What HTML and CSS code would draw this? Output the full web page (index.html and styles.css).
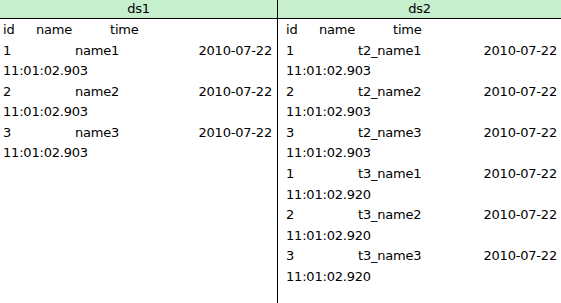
FILE: index.html
```html
<!DOCTYPE html>
<html>
<head>
<meta charset="utf-8">
<link rel="stylesheet" href="styles.css">
</head>
<body>
<div class="panes">
  <section class="pane pane-left">
    <div class="pane-head">ds1</div>
    <div class="pane-body">
      <div class="cols"><span>id</span><span>name</span><span>time</span></div>
      <div class="rec"><span>1</span><span>name1</span><span class="dt">2010-07-22</span><span class="tm">11:01:02.903</span></div>
      <div class="rec"><span>2</span><span>name2</span><span class="dt">2010-07-22</span><span class="tm">11:01:02.903</span></div>
      <div class="rec"><span>3</span><span>name3</span><span class="dt">2010-07-22</span><span class="tm">11:01:02.903</span></div>
    </div>
  </section>
  <section class="pane pane-right">
    <div class="pane-head">ds2</div>
    <div class="pane-body">
      <div class="cols"><span>id</span><span>name</span><span>time</span></div>
      <div class="rec"><span>1</span><span>t2_name1</span><span class="dt">2010-07-22</span><span class="tm">11:01:02.903</span></div>
      <div class="rec"><span>2</span><span>t2_name2</span><span class="dt">2010-07-22</span><span class="tm">11:01:02.903</span></div>
      <div class="rec"><span>3</span><span>t2_name3</span><span class="dt">2010-07-22</span><span class="tm">11:01:02.903</span></div>
      <div class="rec"><span>1</span><span>t3_name1</span><span class="dt">2010-07-22</span><span class="tm">11:01:02.920</span></div>
      <div class="rec"><span>2</span><span>t3_name2</span><span class="dt">2010-07-22</span><span class="tm">11:01:02.920</span></div>
      <div class="rec"><span>3</span><span>t3_name3</span><span class="dt">2010-07-22</span><span class="tm">11:01:02.920</span></div>
    </div>
  </section>
</div>
</body>
</html>
```
FILE: styles.css
```css
html, body {
  margin: 0;
  padding: 0;
  background: #ffffff;
}
body {
  font-family: "DejaVu Sans", Verdana, sans-serif;
  font-size: 13px;
  letter-spacing: -0.2px;
  color: #000000;
}
.panes {
  display: grid;
  grid-template-columns: 278px 1fr;
  height: 303px;
  overflow: hidden;
}
.pane-left {
  border-right: 1px solid #000000;
}
.pane-head {
  height: 18px;
  line-height: 18px;
  background: #c6efce;
  border-bottom: 1px solid #000000;
  text-align: center;
}
.pane-body {
  padding-top: 1px;
  line-height: 20.56px;
}
.pane-left .pane-body {
  padding-left: 3px;
  padding-right: 5px;
}
.pane-right .pane-body {
  padding-left: 8px;
  padding-right: 4px;
}
.cols {
  display: grid;
  grid-template-columns: 33px 74px auto;
  justify-content: start;
}
.rec {
  display: grid;
  grid-template-columns: 72px 1fr auto;
}
.rec .dt {
  text-align: right;
}
.rec .tm {
  grid-column: 1 / -1;
}
```
